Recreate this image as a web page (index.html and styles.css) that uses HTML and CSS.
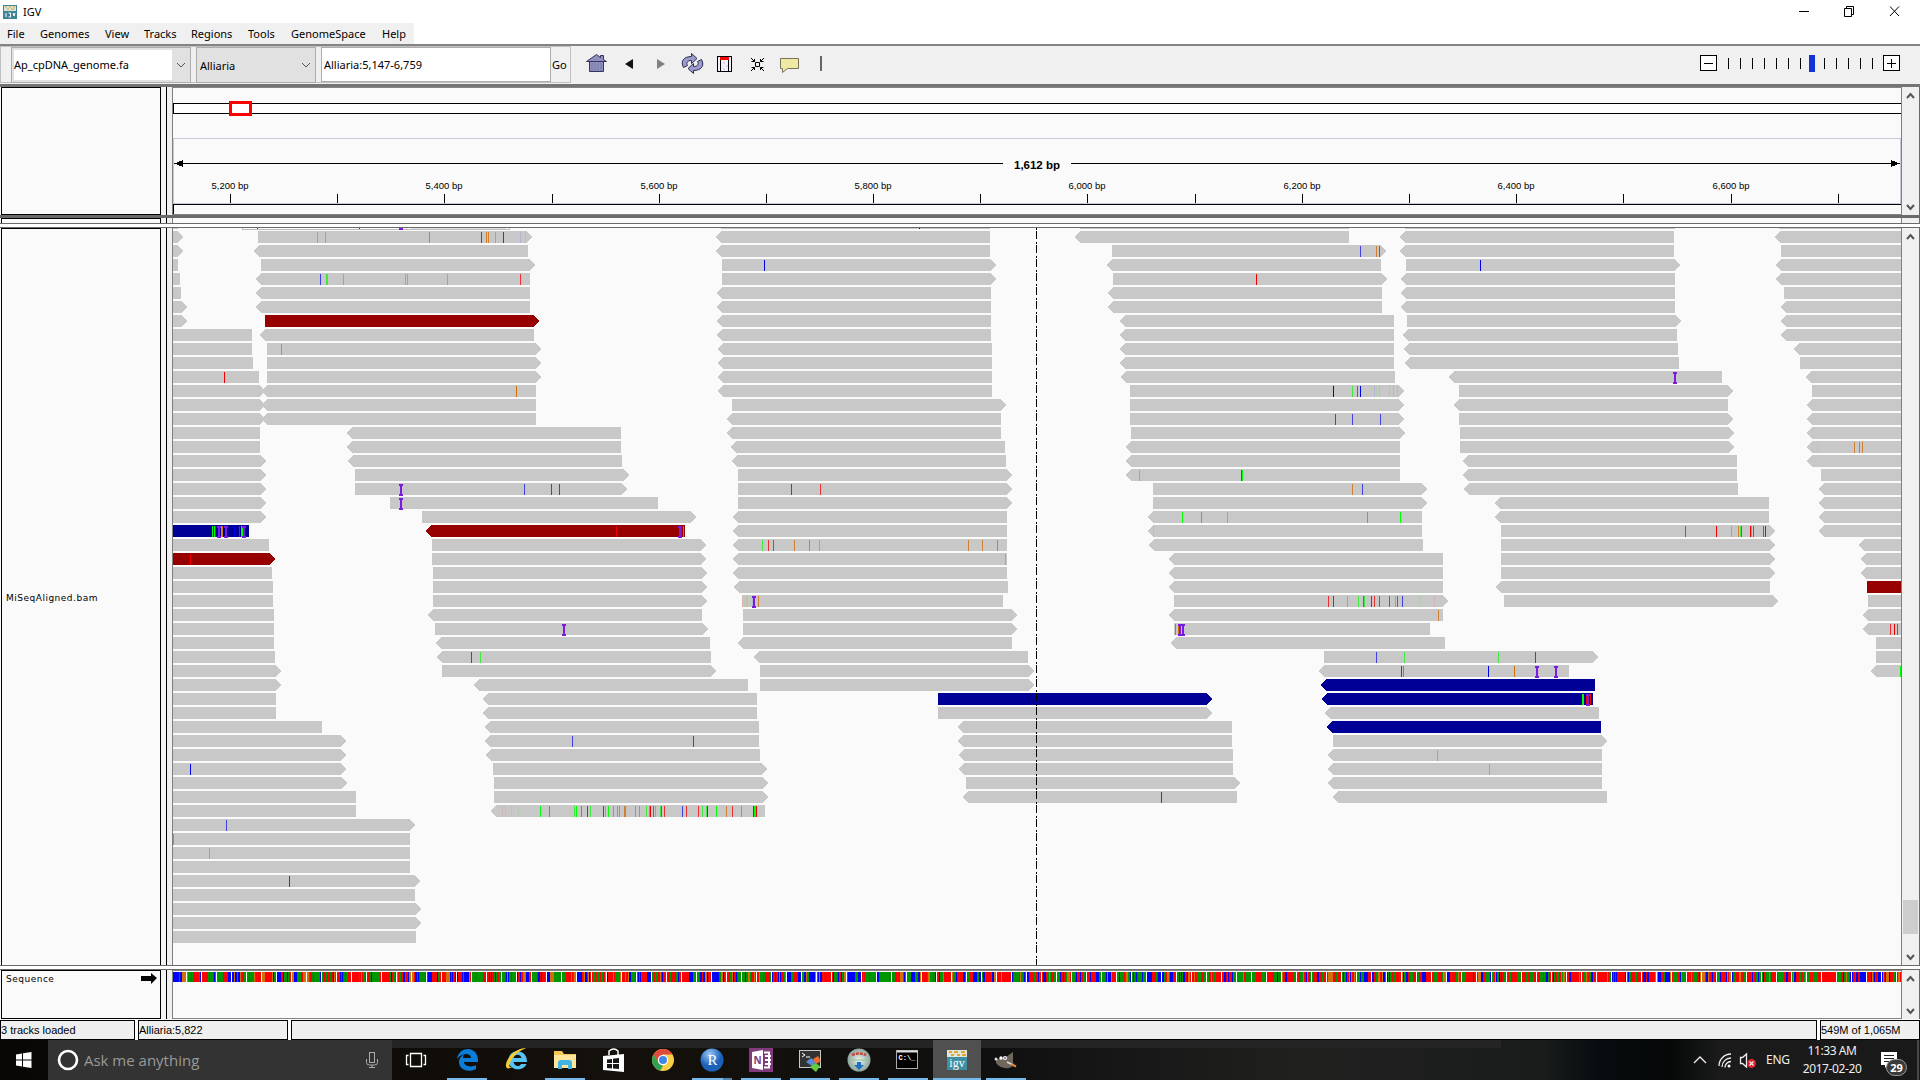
FILE: index.html
```html
<!DOCTYPE html>
<html lang="en">
<head>
<meta charset="utf-8">
<title>IGV</title>
<link rel="stylesheet" href="styles.css">
</head>
<body>
<header class="titlebar">
  <svg class="app-icon" width="14" height="14" viewBox="0 0 14 14"><rect width="14" height="14" fill="#3f8396"/><path d="M1 1h12v5H1z" fill="#d9e3d2"/><path d="M2 2h2M6 2h2M10 2h2M4 4h2M8 4h3" stroke="#e0a030"/><path d="M3 8v4M5.500 8h2v4h-2M10 8l1 3 1-3" stroke="#fff" fill="none"/></svg>
  <span class="app-name">IGV</span>
  <svg class="window-buttons" width="110" height="22" viewBox="1795 0 110 22" fill="none" stroke="#000"><path d="M1799 10.500h10M1844.500 7.500h7v8h-7zM1846.500 7v-1.500h7v8h-2M1890 5.500l9 9.500M1899 5.500l-9 9.500"/></svg>
</header>
<nav class="menubar"><span style="width:33px">File</span><span style="width:65px">Genomes</span><span style="width:39px">View</span><span style="width:47px">Tracks</span><span style="width:57px">Regions</span><span style="width:43px">Tools</span><span style="width:91px">GenomeSpace</span><span>Help</span></nav>
<section class="toolbar">
  <div class="locus-group">
    <div class="combo genome"><span class="combo-text">Ap_cpDNA_genome.fa</span><svg width="18" height="12" viewBox="0 0 18 12"><path d="M5 4l4 4 4-4" fill="none" stroke="#555"/></svg></div>
    <div class="combo chrom"><span>Alliaria</span><svg width="18" height="12" viewBox="0 0 18 12"><path d="M5 4l4 4 4-4" fill="none" stroke="#555"/></svg></div>
    <div class="locus">Alliaria:5,147-6,759</div>
    <div class="go">Go</div>
  </div>
  <svg class="tools" width="250" height="36" viewBox="580 47 250 36">
    <g fill="#8f8fc0" stroke="#34345c"><path d="M589.500 62v10.500h14V62z"/><path d="M586.500 62.500l10-7 4 3v-2h3v4l3 2z"/></g><path d="M592 64v8M595 64v8M598 64v8M601 64v8" stroke="#777aa8"/>
    <path d="M633 60v10l-8-5z" fill="#111"/><path d="M657 60v10l8-5z" fill="#808080"/>
    <g fill="#9c9ccc" stroke="#2c2c54"><path id="cycle" d="M683.500 68.500C680 62 684 57.500 691.500 57.500V54.500L697 59.500L691.500 64.500V61.500C687.500 61.500 686 63.500 687.500 66.500Z"/><path d="M701.500 60.500C705 67 701 71.500 693.500 71.500V74.500L688 69.500L693.500 64.500V67.500C697.500 67.500 699 65.500 697.500 62.500Z"/></g>
    <rect x="717.500" y="57.500" width="14" height="15" fill="#f2f0fa" stroke="#000"/><path d="M720.500 58v14M728.500 58v14" stroke="#000"/><path d="M720 58h9v3h-9z" fill="#f00"/><path d="M723 64h2M726 67h2M723 70h2" stroke="#bbbbee"/>
    <g fill="none" stroke="#000"><path d="M755.500 63.500h4v4h-4zM751 59l3.500 3.500M764 59l-3.500 3.500M751 72l3.500-3.500M764 72l-3.500-3.500M754.500 60v2.500h-3M760.500 60v2.500h3M754.500 71v-2.500h-3M760.500 71v-2.500h3"/></g>
    <path d="M780.500 59.500h18v10h-11l-5 4v-4h-2z" fill="#f0e9a2" stroke="#77735a"/>
    <path d="M821 57v15" stroke="#666" stroke-width="2"/>
  </svg>
  <svg class="zoomer" width="220" height="36" viewBox="1690 47 220 36" shape-rendering="crispEdges"><g stroke="#000" fill="#fff"><path d="M1700.500 56.500h16v15h-16zM1883.500 56.500h16v15h-16z"/><path d="M1704 64.500h9M1887 64.500h9M1891.500 60v9M1728.500 59v11M1740.500 59v11M1752.500 59v11M1764.500 59v11M1776.500 59v11M1788.500 59v11M1800.500 59v11M1824.500 59v11M1836.500 59v11M1848.500 59v11M1860.500 59v11M1872.500 59v11"/></g><path d="M1809 56h6v17h-6z" fill="#1434d8"/></svg>
</section>
<main class="panels">
  <section class="panel head">
    <div class="names"></div><div class="divider"></div>
    <svg class="data" id="ruler" width="1728" height="128" viewBox="173 87 1728 128" shape-rendering="crispEdges"></svg>
    <div class="scroll"><svg viewBox="0 0 17 10" width="17" height="10"><path class="chev" d="M5 7l3.500-4L12 7"/></svg><svg viewBox="0 0 17 10" width="17" height="10"><path class="chev" d="M5 3l3.500 4L12 3"/></svg></div>
  </section>
  <div class="bar thick"></div>
  <section class="panel thin"><div class="names"></div><div class="divider"></div><div class="data"></div><div class="scroll"></div></section>
  <div class="bar splitter"></div>
  <section class="panel tracks">
    <div class="names"><span>MiSeqAligned.bam</span></div><div class="divider"></div>
    <svg class="data" id="reads" width="1728" height="737" viewBox="173 228 1728 737" shape-rendering="crispEdges"></svg>
    <div class="scroll"><svg viewBox="0 0 17 17" width="17" height="17"><path class="chev" d="M5 11l3.500-4L12 11"/></svg><i class="thumb"></i><svg viewBox="0 0 17 17" width="17" height="17"><path class="chev" d="M5 7l3.500 4L12 7"/></svg></div>
  </section>
  <div class="bar splitter"></div>
  <section class="panel sequence">
    <div class="names"><span>Sequence</span><svg width="16" height="11" viewBox="0 0 16 11"><path d="M0 3h10V0l6 5-6 6V8H0z"/></svg></div><div class="divider"></div>
    <svg class="data" id="bases" width="1728" height="49" viewBox="173 970 1728 49" shape-rendering="crispEdges"></svg>
    <div class="scroll"><svg viewBox="0 0 17 17" width="17" height="17"><path class="chev" d="M5 11l3.500-4L12 11"/></svg><svg viewBox="0 0 17 17" width="17" height="17"><path class="chev" d="M5 7l3.500 4L12 7"/></svg></div>
  </section>
</main>
<footer class="status"><div class="s1">3 tracks loaded</div><div class="s2">Alliaria:5,822</div><div class="s3"></div><div class="s4">549M of 1,065M</div></footer>
<footer class="taskbar">
  <div class="start"><svg width="18" height="18" viewBox="0 0 18 18" fill="#fff"><path d="M1 3.500l6-1v6H1zM8 2.300L16.500 1v7.500H8zM1 9.500h6v6l-6-1zM8 9.500h8.500V17L8 15.700z"/></svg></div>
  <div class="search"><svg width="22" height="22" viewBox="0 0 22 22"><circle cx="11" cy="11" r="9" fill="none" stroke="#fff" stroke-width="2.600"/></svg><span>Ask me anything</span><svg width="12" height="18" viewBox="0 0 12 18" fill="none" stroke="#aaa"><rect x="3.500" y="1.500" width="5" height="10"/><path d="M.5 8v3.500q0 2.500 3 2.500h5q3 0 3-2.500V8M6 14v3M3 16.500h6"/></svg></div>
  <svg class="apps" width="640" height="40" viewBox="392 1040 640 40">
    <defs>
      <radialGradient id="rb" cx=".4" cy=".25"><stop offset="0" stop-color="#9cc9f6"/><stop offset="1" stop-color="#1b61b8"/></radialGradient>
      <radialGradient id="gb"><stop offset="0" stop-color="#e9f2ee"/><stop offset="1" stop-color="#8ea59c"/></radialGradient>
    </defs>
    <rect x="392" y="1040" width="640" height="8" fill="#242424"/>
    <rect x="933" y="1040" width="48" height="40" fill="#505050"/>
    <g fill="none" stroke="#fff" stroke-width="1.300"><path d="M410.500 1053.500h11v13h-11zM408.500 1055.500h-2v9h2M423.500 1055.500h2v9h-2"/></g>
    <path d="M457 1059c1-6 5-10 11-10 6 0 10 5 10 11v2h-14c0 4 7 6 12 3v4c-7 4-17 1-17-7 0-4 3-7 6-8-2 1-2 3-2 4h8c0-5-9-6-14 1z" fill="#0c7cd9"/>
    <g transform="translate(505 1048)"><path d="M22 14H8.500c1 5 6.500 5 7.500 2h5.500c-3 8-18 7-18-3.500C3.500 0 22.500 0 22 14zM8.500 10h8c-1-4.500-7-4.500-8 0z" fill="#55c4f2"/><path d="M22 1c-5-3-15 3-19 10-4 7-2 12 4 8-4 1-3-3 0-8 4-6 12-11 15-10z" fill="#f7cb33"/></g>
    <g transform="translate(554 1050)"><path d="M0 1h8l2 3h12v14H0z" fill="#f4c658"/><path d="M0 5h22v13H0z" fill="#fde59b"/><path d="M4 19v-6q0-3 3-3h8q3 0 3 3v6h-4v-4H8v4z" fill="#3fb4e6"/></g>
    <g transform="translate(603 1048)"><path d="M6 7V3q5-4 9 0v4" fill="none" stroke="#fff" stroke-width="1.500"/><path d="M0 8l21-2v18l-21-2z" fill="#fff"/><path d="M4 11.500l5-.6v4H4zM10 10.800l6-.8v5h-6zM4 16h5v4.500l-5-.5zM10 16h6v5l-6-.5z" fill="#151515"/></g>
    <g><circle cx="663" cy="1060" r="11" fill="#f9cf45"/><path d="M653.500 1054.500a11 11 0 0 1 19 0H663l-5 8z" fill="#e04a3c"/><path d="M653.500 1054.500l5 8.500 4.500 3-3 4.500a11 11 0 0 1-6.500-16z" fill="#2fa155"/><circle cx="663" cy="1060" r="5.200" fill="#fff"/><circle cx="663" cy="1060" r="4" fill="#4285ea"/></g>
    <circle cx="712" cy="1060" r="11.500" fill="url(#rb)"/><text x="712.500" y="1065" text-anchor="middle" class="r-letter">R</text>
    <rect x="749" y="1048" width="24" height="24" fill="#813a7c"/><path d="M752 1052l11-2v20l-11-2z" fill="#fff"/><path d="M764 1052.500h5v15h-5M765 1056h6M765 1060h6M765 1064h6" fill="none" stroke="#fff" stroke-width="2"/><text x="753.500" y="1064" class="n-letter">N</text>
    <rect x="799.500" y="1050.500" width="21" height="17" fill="#333" stroke="#c9c9c9"/><path d="M802 1053l3 2-3 2M806 1057h4" stroke="#fff" fill="none"/><path d="M806 1062l5-4 5 4-4 4z" fill="#5b8bd9"/><path d="M813 1059l5-3 3 5-5 3z" fill="#ef6c2e"/><path d="M810 1067l5-4 5 3-4 6z" fill="#61cd40"/>
    <circle cx="859" cy="1060" r="11.500" fill="url(#gb)"/><path d="M852 1055q7-3 14 0" stroke="#c74a3b" stroke-width="2.500" fill="none" stroke-dasharray="3 1"/><path d="M849 1060h20" stroke="#8ac28b"/><path d="M857 1062h4v3h3l-5 5-5-5h3z" fill="#1d72c0"/>
    <rect x="896.500" y="1050.500" width="21" height="18" fill="#000" stroke="#ababab"/><path d="M897 1051.500h21" stroke="#ddd" stroke-width="2"/><text x="898.500" y="1060" class="cmd-text">C:\_</text>
    <rect x="947" y="1050" width="20" height="20" fill="#3f8fa3"/><path d="M947 1050h20v7h-20z" fill="#dfe6da"/><path d="M949 1052h3M954 1052h4M961 1052h4M951 1055h3M957 1055h3M962 1055h4" stroke="#e5a62f" stroke-width="2"/><text x="957" y="1067" text-anchor="middle" class="igv-text">igv</text>
    <path d="M996 1059q6 0 10-2l7-5v10q2 4-4 6-9 1-13-5z" fill="#6f675c"/><circle cx="1001" cy="1058" r="1.700" fill="#fff"/><circle cx="1005" cy="1058" r="2" fill="#fff"/><circle cx="1005" cy="1058" r=".8"/><path d="M1007 1062l5 2.500" stroke="#ddd" stroke-width="1.500"/><path d="M1011 1064l5 2.500" stroke="#e08b3c" stroke-width="2"/><circle cx="996" cy="1059" r="1.500" fill="#ddd"/>
    <g fill="#76b9ed"><path d="M447 1078h40v2h-40zM545 1078h40v2h-40zM692 1078h40v2h-40zM741 1078h40v2h-40zM790 1078h40v2h-40zM839 1078h40v2h-40zM888 1078h40v2h-40zM933 1078h48v2h-48zM986 1078h40v2h-40z"/></g><path d="M723 1078h9v2h-9z" fill="#5585ab"/>
  </svg>
  <div class="desk-strip"></div>
  <svg class="tray" width="80" height="40" viewBox="1690 1040 80 40" fill="none" stroke="#eee" stroke-width="1.300"><path d="M1695 1063l6-6 6 6"/><path d="M1720 1066a12 12 0 0 1 12-12M1723 1067a9 9 0 0 1 9-9M1726 1067.500a6 6 0 0 1 6-6" /><circle cx="1730" cy="1066" r="1.500" fill="#fff" stroke="none"/><path d="M1741.500 1057.500h2l4-3.500v13l-4-3.500h-2z"/><circle cx="1752.500" cy="1063.500" r="4.500" fill="#d9232e" stroke="none"/><path d="M1750.500 1061.500l4 4M1754.500 1061.500l-4 4"/></svg>
  <span class="lang">ENG</span>
  <div class="clock"><span>11:33 AM</span><span>2017-02-20</span></div>
  <svg class="notif" width="48" height="40" viewBox="1870 1040 48 40"><path d="M1879 1052h16v13h-9l-3 3v-3h-4z" fill="#fff"/><path d="M1882 1055.500h10M1882 1058.500h10M1882 1061.500h7" stroke="#222"/><rect x="1884.500" y="1059.500" width="20" height="16" rx="8" fill="#3a3a3a" stroke="#999"/><text x="1894.500" y="1071.500" text-anchor="middle" class="badge">29</text><path d="M1916 1040v40" stroke="#777"/></svg>
</footer>
<script src="igv.js"></script>
</body>
</html>
```
FILE: styles.css
```css
* { box-sizing: border-box; }
body { margin: 0; width: 1920px; height: 1080px; overflow: hidden; background: #fff; color: #000; font: 11.5px "Noto Sans", "Open Sans", sans-serif; display: flex; flex-direction: column; }
svg { display: block; flex: none; }
.titlebar { height: 23px; display: flex; align-items: center; padding-left: 3px; flex: none; }
.app-icon { margin-right: 6px; }
.app-name { font-size: 11px; }
.window-buttons { margin-left: auto; margin-right: 15px; }
.menubar { height: 21px; width: 414px; background: #f0f0f0; display: flex; align-items: center; padding-left: 7px; flex: none; white-space: nowrap; font-size: 11px; }
.toolbar { height: 43px; flex: none; border-top: 2px solid #848484; border-bottom: 3px solid #747474; background: #f0f0f0; display: flex; }
.locus-group { width: 571px; height: 37px; border: 1px solid #c0c0c0; display: flex; gap: 5px; padding-left: 10px; font-size: 11px; white-space: nowrap; }
.combo { height: 36px; border: 1px solid #adadad; background: #e1e1e1; display: flex; align-items: center; justify-content: space-between; }
.genome { width: 180px; padding-left: 2px; }
.combo-text { background: #fff; height: 30px; width: 158px; line-height: 30px; }
.chrom { width: 120px; padding-left: 3px; }
.locus { width: 230px; border: 1px solid #adadad; background: #fff; line-height: 34px; padding-left: 2px; }
.go { line-height: 36px; margin-left: -4px; }
.tools { margin-left: 9px; }
.zoomer { margin-left: auto; margin-right: 10px; }
.panels { flex: none; height: 933px; display: flex; flex-direction: column; background: #fafafa; }
.panel { display: flex; flex: none; border-right: 1px solid #6a6a6a; }
.names { width: 160px; margin-left: 1px; border: 1px solid #000; background: #fafafa; flex: none; font: 9px/12px "DejaVu Sans", sans-serif; letter-spacing: .5px; }
.divider { width: 12px; flex: none; border-right: 1px solid #808080; background: linear-gradient(90deg, #f4f4f4 5px, #000 5px 6px, #f0f0f0 6px); }
.data { width: 1728px; flex: none; background: #fafafa; }
.scroll { width: 18px; flex: none; border-left: 1px solid #808080; background: #f0f0f0; display: flex; flex-direction: column; justify-content: space-between; }
.chev { fill: none; stroke: #555; stroke-width: 2; }
.head { height: 128px; }
.head .scroll { padding: 4px 0 3px; }
.thick { height: 2px; background: #6a6a6a; flex: none; }
.thin { height: 6px; border-top: 1px solid #6a6a6a; }
.thin .names { border-bottom: 0; }
.splitter { height: 5px; flex: none; background: #fff; border-top: 1px solid #6a6a6a; border-bottom: 1px solid #6a6a6a; }
.tracks { height: 737px; }
.tracks .names { border-bottom: 0; display: flex; align-items: center; padding: 1px 0 0 4px; }
.tracks .thumb { width: 15px; height: 34px; background: #cdcdcd; margin: auto 0 14px 1px; }
.sequence { height: 49px; }
.sequence .names { display: flex; justify-content: space-between; padding: 2px 3px 0 4px; }
.status { flex: none; height: 20px; background: #fff; display: flex; gap: 3px; font: 11px/19px "Liberation Sans", sans-serif; white-space: nowrap; }
.status div { border: 1px solid #000; background: #efefef; }
.s1 { width: 135px; } .s2 { width: 150px; } .s3 { flex: 1; } .s4 { width: 100px; }
.taskbar { flex: none; height: 40px; display: flex; background: linear-gradient(90deg, #080706 0, #14100b 620px, #101010 1000px, #20211f 1300px, #1a1c1c 1540px, #060c0e 1600px, #060808 1670px, #1b1b1b 1720px, #191919 1920px); color: #eee; }
.start { width: 48px; display: flex; align-items: center; justify-content: center; }
.search { width: 344px; background: #333; display: flex; align-items: center; padding: 0 14px 0 9px; font: 15px "Open Sans", "Noto Sans", sans-serif; color: #999; }
.search span { margin-left: 5px; flex: 1; }
.desk-strip { width: 470px; height: 8px; background: #242424; margin-right: 188px; }
.lang { font-size: 12px; line-height: 39px; width: 28px; margin-left: -3px; letter-spacing: -.3px; }
.clock { width: 74px; font-size: 12px; line-height: 18px; display: flex; flex-direction: column; align-items: center; padding-top: 2px; margin: 0 2px 0 1px; white-space: nowrap; letter-spacing: -.4px; }
.notif { margin-left: 1px; }
.badge { font: bold 11px "Noto Sans", sans-serif; fill: #fff; }
.r-letter { font: 15px "Liberation Serif", serif; fill: #fff; }
.n-letter { font: bold 10px "Noto Sans", sans-serif; fill: #813a7c; }
.cmd-text { font: bold 7px "Liberation Mono", monospace; fill: #fff; }
.igv-text { font: 12px "Liberation Serif", serif; fill: #fff; }
.tick-label { font: 9.5px "Liberation Sans", sans-serif; }
.span-label { font: bold 11.5px "Liberation Sans", sans-serif; }
```
FILE: igv.js
```js
// One line per group of rows: rows | start | end | direction | colour | marks.
// Marks are colour letter + x position: r g b o (upper case for full strength),
// pale p(ink) q(green) v(violet), I insertion.
const LEFT = 173, RIGHT = 1901, TOP = 231, PITCH = 14;
const reads = `
0|173|178|>
1|173|178|>
2|173|178
3|173|180
4|173|181
5-6|173|182|>
7-8|173|252|
9|173|253|
10|173|259||k|R224
11-13|173|260|>
14-15|173|260|
16-20|173|261|>
21|173|249||n|G212 G214 R215 I219 G221 O222 I226 B234 R239 G241 G242 I244
22|173|269|
23|173|270|>|d|R190
24|173|272|
25-26|173|273|
27-29|173|274|
30|173|275|
31-32|173|276|>
33-34|173|276|
35|173|322|
36-37|173|341|>
38|173|341|>|k|B190
39|173|342|>
40-41|173|356|
42|173|410|>|k|b226
43|173|410||k|o173
44|173|410||k|g209
45|173|410|
46|173|415|>|k|R289
47|173|415|
48-49|173|416|>
50|173|416|
0|258|527|>|k|g317 g325 o429 b481 o486 o488 g495 R503 v520 p525
1|259|528|<
2|261|530|>
3|261|530|<|k|b320 g326 g327 g343 g405 g407 g447 r520
4-5|261|530|<
6|265|534|>|d
7|265|534|<
8|267|536|>|k|G281
9-10|267|536|>
11|267|536|<|k|O516
12-13|267|536|<
14-15|352|621|<
16|353|622|<
17|355|624|>
18|355|622|>|k|I401 b524 b551 b559
19|390|658||k|I401
20|422|691|>
21|431|685|<|d|R616 R681 I680 O683
22-23|432|701|>
24-26|433|702|>
27|433|702|<
28|435|703|>|k|I564
29|441|710|<
30|442|711|<|k|b471 g480
31|442|711|>
32|479|748|<
33-34|488|757|<
35|490|759|<
36|490|759|<|k|b572 b693
37|491|760|<
38|493|762|>
39-40|494|763|>
41|496|765|<|k|p502 q505 q511 q518 G540 O549 g574 G576 O581 b587 g590 b603 g605 G608 G613 G617 G619 o624 o625 G635 G639 g646 o649 R650 r653 g655 g660 r661 r664 b682 r686 r698 g702 g706 R707 G716 o726 r732 G741 R753 G754 G755 R756
0-1|721|990|<
2|722|991|>|k|B764
3|722|991|>
4-7|722|991|<
8-11|723|992|<
12|732|1001|>
13-14|732|1001|<
15|736|1005|<
16|737|1006|<
17|738|1007|>
18|738|1007|>|k|b791 r820
19|738|1007|>
20-21|738|1007|<
22|738|1007|<|k|g762 r768 r773 o794 o809 g819 o968 o982 o997
23|738|1007|<|k|g1005
24|738|1007|<
25|739|1008|<
26|742|1003||k|p742 q744 p746 p747 q750 v752 I754 o758
27-28|743|1012|>
29|743|1012|<
30|759|1028|<
31-32|760|1029|>
33|938|1207|>|n
34|938|1207|>
35|963|1232|<
36|963|1232|<
37-38|964|1233|<
39|966|1235|>
40|968|1237|<|k|R1161
0|1080|1349|<
1|1112|1381|>|k|b1360 o1376 r1379
2|1112|1381|<
3|1113|1382|>|k|R1256
4-5|1113|1382|<
6-9|1125|1394|<
10|1126|1395|<
11|1130|1399|>|k|B1333 g1352 r1357 B1360 v1374 q1376 p1379 p1389 v1393 p1397
12|1130|1399|>
13|1130|1399|>|k|b1335 b1352 b1380
14|1131|1400|>
15-16|1131|1400|<
17|1131|1400|<|k|g1139 b1241 G1242
18|1153|1422|>|k|o1352 b1362
19|1153|1422|>
20|1153|1422|<|k|G1182 o1201 g1227 o1367 G1400
21|1153|1422|<|k|p1153
22|1154|1423|<
23-25|1174|1443|<
26|1174|1443|>|k|r1328 b1333 g1347 g1358 r1363 g1364 b1371 r1374 r1379 r1389 g1395 r1397 b1402 q1420 p1434
27|1174|1443|<|k|o1438
28|1174|1430||k|O1175 O1178 I1180 I1183
29|1176|1445|<
30|1324|1593|>|k|b1376 g1404 g1498 b1535
31|1324|1569|<|k|R1401 O1403 B1488 O1514 I1537 I1556
32|1326|1595|<|n
33|1327|1593|<|n|G1582 G1583 R1586 R1590 I1588
34|1330|1599|<
35|1332|1601|<|n
36|1333|1602|>
37|1333|1602|<|k|g1437
38|1333|1602|<|k|g1489
39|1333|1602|<
40|1338|1607|<
0-1|1405|1674|<
2|1406|1675|>|k|B1480
3-5|1406|1675|<
6|1407|1676|>
7|1408|1677|<
8|1409|1678|<
9|1410|1679|<
10|1454|1722|<|k|I1675
11|1459|1728|>
12|1459|1728|<
13|1459|1728|>
14-15|1460|1729|>
16-17|1468|1737|<
18|1469|1738|<
19-20|1500|1769|<
21|1501|1770|>|k|r1685 R1716 g1731 o1738 g1740 r1741 R1750 G1751 r1753 r1763 R1765
22-24|1501|1770|>
25|1501|1770|<
26|1504|1773|>
0|1780|1901|<
1|1781|1901|
2-3|1781|1901|<
4|1784|1901|
5-7|1786|1901|<
8|1799|1901|<
9|1800|1901|
10|1811|1901|<
11|1812|1901|
12-14|1812|1901|<
15|1812|1901|<|k|q1817 o1854 o1859 o1862
16|1812|1901|<
17|1821|1901|
18-21|1824|1901|<
22|1864|1901|<
23-24|1866|1901|<
25|1867|1901||d
26|1868|1901|
27|1868|1901|<
28|1868|1901|<|k|r1890 R1894 r1897
29-30|1876|1901|
31|1876|1901|<|k|G1900`;

const fills = { k: '#c8c8c8', n: '#000096', d: '#960000' };
const inks = { r: '#f03030', g: '#40e840', b: '#4040e4', o: '#d08030', R: '#f00000', G: '#00ff00', B: '#0000f0', O: '#d17105', p: '#d3b4b4', q: '#b0cdb0', v: '#b4b4d3' };
const rect = (x, y, w, h, f) => `<rect x="${x}" y="${y}" width="${w}" height="${h}" fill="${f}"/>`;

let out = '';
for (const [a, b] of [[173, 178], [721, 990], [1080, 1349], [1405, 1675], [1779, 1901]]) out += rect(a, 228, b - a, 1, '#c8c8c8');
out += rect(242, 228, 268, 2, '#bdbdbd') + rect(243, 228, 266, 1, '#fff') + rect(411, 228, 95, 1, '#e6e2ea') + rect(257, 228, 1, 1, '#c00') + rect(359, 228, 1, 1, '#c00') + rect(399, 228, 4, 2, '#7a1be0') + rect(919, 228, 1, 1, '#00f');

for (const line of reads.trim().split('\n')) {
  const [rows, x1, x2, dir, colour, marks] = line.split('|');
  const [from, to = from] = rows.split('-').map(Number);
  const a = +x1, b = +x2, fill = fills[colour || 'k'];
  for (let row = from; row <= to; row++) {
    const y = TOP + row * PITCH;
    let d = `M${a} ${y}H${b}`;
    d += dir === '>' ? `L${b + 5} ${y + 6}L${b} ${y + 12}` : `V${y + 12}`;
    d += `H${a}` + (dir === '<' ? `L${a - 5} ${y + 6}Z` : 'Z');
    out += `<path d="${d}" fill="${fill}"/>`;
    for (const m of (marks || '').split(' ').filter(Boolean)) {
      const x = +m.slice(1);
      if (m[0] === 'I') out += rect(x - 1, y + 1, 2, 12, '#7a1be0') + rect(x - 2, y + 1, 4, 2, '#7a1be0') + rect(x - 2, y + 11, 4, 2, '#7a1be0');
      else out += rect(x, y + 1, 1, 11, inks[m[0]]);
    }
  }
}
for (let y = 228; y < 965; y += 14) out += rect(1036, y, 1, 2, '#000') + rect(1036, y + 3, 1, 8, '#000');
document.getElementById('reads').innerHTML = out;

// Ideogram, span arrow and tick marks.
const perBase = (RIGHT - LEFT) / 1612;
out = rect(173, 103, 1728, 11, '#000') + rect(174, 104, 1727, 9, '#fff');
out += '<rect x="230.500" y="102.500" width="20" height="12" fill="#fff" stroke="#f00" stroke-width="3"/>';
out += rect(173, 138, 1728, 1, '#c8c8dc') + rect(173, 138, 1, 66, '#c8c8dc') + rect(1900, 138, 1, 66, '#c8c8dc') + rect(173, 203, 1728, 1, '#c8c8dc');
out += rect(175, 163, 828, 1, '#000') + rect(1071, 163, 829, 1, '#000') + '<path d="M174 163.500l9-3.500v7zM1900 163.500l-9-3.500v7z"/>';
out += '<text class="span-label" x="1037" y="168.500" text-anchor="middle">1,612 bp</text>';
for (let p = 5200; p < 6759; p += 100) {
  const x = Math.floor(LEFT + (p - 5147) * perBase + 0.6);
  out += rect(x, 194, 1, 9, '#000');
  if (p % 200 === 0) out += `<text class="tick-label" x="${x}" y="189" text-anchor="middle">${p.toLocaleString('en-US')} bp</text>`;
}
out += rect(173, 204, 1728, 1, '#000') + rect(173, 204, 1, 10, '#000') + rect(173, 214, 1728, 1, '#848484') + rect(173, 87, 1728, 1, '#848484');
document.getElementById('ruler').innerHTML = out;

// Reference bases, one coloured bar each.
let seed = 90210;
const next = () => (seed = (seed * 1103515245 + 12345) % 2147483648) / 2147483648;
const baseInk = ['#f00', '#f00', '#f00', '#f00', '#009600', '#009600', '#009600', '#00f', '#00f', '#d17105'];
out = rect(173, 970, 1728, 1, '#848484') + rect(173, 972, 1728, 10, '#fff') + rect(173, 1018, 1728, 1, '#848484');
let ink = '#00f';
for (let x = 0; x < 1728; x++) {
  if (x % 15 === 13) continue;
  if (x > 3 && next() > 0.35) ink = baseInk[Math.floor(next() * 10)];
  out += rect(LEFT + x, 972, 1, 10, ink);
}
document.getElementById('bases').innerHTML = out;
```
